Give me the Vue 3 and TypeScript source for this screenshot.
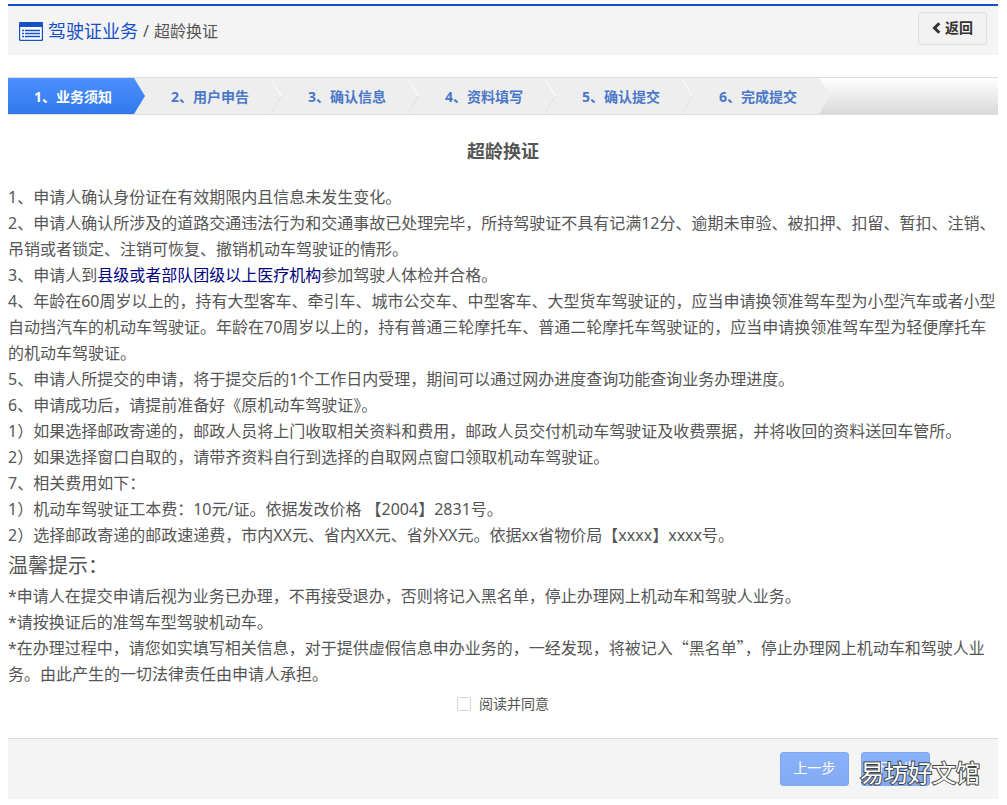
<script setup lang="ts">
import { ref } from 'vue'

const steps: string[] = ['业务须知', '用户申告', '确认信息', '资料填写', '确认提交', '完成提交']
const current = ref<number>(0)
const agreed = ref<boolean>(false)
</script>

<template>
  <div class="page">
    <header class="header">
      <h1 class="crumbs">
        <svg class="list-icon" viewBox="0 0 24 19" aria-hidden="true">
          <rect x="0.5" y="0.5" width="23" height="18" rx="1.5" fill="#fff" stroke="#1450c8" stroke-width="1.4" />
          <rect x="0" y="0" width="24" height="5" rx="1.5" fill="#1450c8" />
          <path d="M3 8.5h2M3 11.5h2M3 14.5h2M6 8.5h15M6 11.5h15M6 14.5h15" stroke="#1450c8" stroke-width="1.4" />
        </svg>
        <a href="#" class="section">驾驶证业务</a>
        <span class="slash">/</span>
        <span class="current">超龄换证</span>
      </h1>
      <button type="button" class="back">
        <svg class="chevron" viewBox="0 0 9 12" aria-hidden="true">
          <path d="M7.3 1.2L2.5 6l4.8 4.8" fill="none" stroke="#333" stroke-width="3" />
        </svg>
        返回
      </button>
    </header>

    <ol class="steps">
      <li v-for="(step, i) in steps" :key="step" class="step" :class="{ active: i === current }">
        {{ i + 1 }}、{{ step }}
        <svg class="edge" viewBox="0 0 11 36" aria-hidden="true">
          <path d="M0 0L10.5 18" fill="none" stroke="#fff" stroke-width="1.5" stroke-opacity="0.8" />
          <path d="M10.5 18L0 36" fill="none" stroke="#dcdcdc" stroke-width="1" />
        </svg>
      </li>
    </ol>

    <main class="content">
      <h2 class="title">超龄换证</h2>
      <p>1、申请人确认身份证在有效期限内且信息未发生变化。</p>
      <p>2、申请人确认所涉及的道路交通违法行为和交通事故已处理完毕，所持驾驶证不具有记满12分、逾期未审验、被扣押、扣留、暂扣、注销、吊销或者锁定、注销可恢复、撤销机动车驾驶证的情形。</p>
      <p>3、申请人到<span class="mark">县级或者部队团级以上医疗机构</span>参加驾驶人体检并合格。</p>
      <p>4、年龄在60周岁以上的，持有大型客车、牵引车、城市公交车、中型客车、大型货车驾驶证的，应当申请换领准驾车型为小型汽车或者小型自动挡汽车的机动车驾驶证。年龄在70周岁以上的，持有普通三轮摩托车、普通二轮摩托车驾驶证的，应当申请换领准驾车型为轻便摩托车的机动车驾驶证。</p>
      <p>5、申请人所提交的申请，将于提交后的1个工作日内受理，期间可以通过网办进度查询功能查询业务办理进度。</p>
      <p>6、申请成功后，请提前准备好《原机动车驾驶证》。</p>
      <p>1）如果选择邮政寄递的，邮政人员将上门收取相关资料和费用，邮政人员交付机动车驾驶证及收费票据，并将收回的资料送回车管所。</p>
      <p>2）如果选择窗口自取的，请带齐资料自行到选择的自取网点窗口领取机动车驾驶证。</p>
      <p>7、相关费用如下：</p>
      <p>1）机动车驾驶证工本费：10元/证。依据发改价格 【2004】2831号。</p>
      <p>2）选择邮政寄递的邮政速递费，市内XX元、省内XX元、省外XX元。依据xx省物价局【xxxx】xxxx号。</p>
      <h3 class="tips">温馨提示：</h3>
      <p>*申请人在提交申请后视为业务已办理，不再接受退办，否则将记入黑名单，停止办理网上机动车和驾驶人业务。</p>
      <p>*请按换证后的准驾车型驾驶机动车。</p>
      <p>*在办理过程中，请您如实填写相关信息，对于提供虚假信息申办业务的，一经发现，将被记入<span class="quoted">“黑名单”</span>，停止办理网上机动车和驾驶人业务。由此产生的一切法律责任由申请人承担。</p>
      <label class="agree">
        <input v-model="agreed" type="checkbox" />
        <span>阅读并同意</span>
      </label>
    </main>

    <footer class="footer">
      <button type="button" class="nav">上一步</button>
      <button type="button" class="nav">下一步</button>
      <span class="watermark">易坊好文馆</span>
    </footer>
  </div>
</template>

<style>
html,
body {
  background: #fff;
}
</style>

<style scoped>
.page {
  margin: 4px 9px 0 8px;
  color: #555;
  font-family: "Noto Sans", "Noto Sans CJK SC", sans-serif;
  font-size: 16px;
  line-height: 26px;
}

.header {
  display: flex;
  justify-content: space-between;
  align-items: flex-start;
  box-sizing: border-box;
  height: 51px;
  padding: 6px 11px 0;
  border-top: 2px solid #1450c8;
  background: #f4f4f4;
}

.crumbs {
  display: flex;
  align-items: center;
  margin: 6px 0 0;
  font-size: 16px;
  font-weight: 400;
}

.list-icon {
  width: 24px;
  height: 19px;
  margin-right: 5px;
}

.section {
  color: #1450c8;
  font-size: 18px;
  text-decoration: none;
}

.slash {
  margin: 0 5px;
}

.back {
  display: flex;
  align-items: center;
  justify-content: center;
  gap: 4px;
  width: 69px;
  height: 33px;
  padding: 0 0 2px;
  border: 1px solid #ddd;
  border-radius: 3px;
  background: #f2f2f2;
  color: #333;
  font: inherit;
  font-size: 14px;
  font-weight: 700;
}

.chevron {
  width: 9px;
  height: 12px;
}

.steps {
  display: flex;
  margin: 22px 0 0;
  padding: 0;
  border-top: 1px solid #ddd;
  border-bottom: 1px solid #ddd;
  background: linear-gradient(#fff, #d9d9d9);
  list-style: none;
}

.step {
  position: relative;
  box-sizing: border-box;
  width: 148px;
  height: 36px;
  margin-left: -11px;
  padding-left: 37px;
  background: #eee;
  clip-path: polygon(0 0, calc(100% - 11px) 0, 100% 50%, calc(100% - 11px) 100%, 0 100%);
  color: #4a78c8;
  font-size: 14px;
  font-weight: 700;
  line-height: 38px;
  white-space: nowrap;
}

.step:nth-child(1) {
  z-index: 6;
  width: 137px;
  margin-left: 0;
  padding-left: 26px;
}

.step:nth-child(2) {
  z-index: 5;
}

.step:nth-child(3) {
  z-index: 4;
}

.step:nth-child(4) {
  z-index: 3;
}

.step:nth-child(5) {
  z-index: 2;
}

.step.active {
  background: linear-gradient(#4d90fe, #3079ed);
  color: #fff;
}

.edge {
  position: absolute;
  top: 0;
  right: 0;
  width: 11px;
  height: 36px;
}

.active .edge,
.step:last-child .edge {
  display: none;
}

.title {
  margin: 23px 0 20px;
  font-size: 18px;
  line-height: 26px;
  text-align: center;
}

.content p {
  margin: 0;
}

.mark {
  color: #000080;
}

.quoted {
  font-family: "Noto Sans CJK SC", sans-serif;
  line-height: 1;
}

.tips {
  margin: 0;
  font-size: 20px;
  font-weight: 400;
  line-height: 35px;
}

.agree {
  display: flex;
  align-items: center;
  justify-content: center;
  gap: 8px;
  margin-top: 4px;
  font-size: 14px;
}

.agree input {
  appearance: none;
  box-sizing: border-box;
  width: 14px;
  height: 14px;
  margin: 0;
  border: 1px solid #d5d5d5;
  border-radius: 1px;
  background: #fff;
}

.agree input:checked {
  background: #4d90fe;
}

.footer {
  position: relative;
  display: flex;
  justify-content: flex-end;
  gap: 12px;
  margin-top: 21px;
  padding: 13px 68px;
  border-top: 1px solid #ddd;
  background: #f4f4f4;
}

.nav {
  width: 69px;
  height: 34px;
  padding: 0 0 2px;
  border: 1px solid #7da7f0;
  border-radius: 3px;
  background: linear-gradient(#88b2fb, #83abf3);
  color: #fff;
  font: inherit;
  font-size: 14px;
}

.watermark {
  position: absolute;
  right: 18px;
  bottom: 9px;
  color: #fff;
  font-size: 24px;
  line-height: 34px;
  -webkit-text-stroke: 2px #444;
  paint-order: stroke fill;
  pointer-events: none;
}
</style>
